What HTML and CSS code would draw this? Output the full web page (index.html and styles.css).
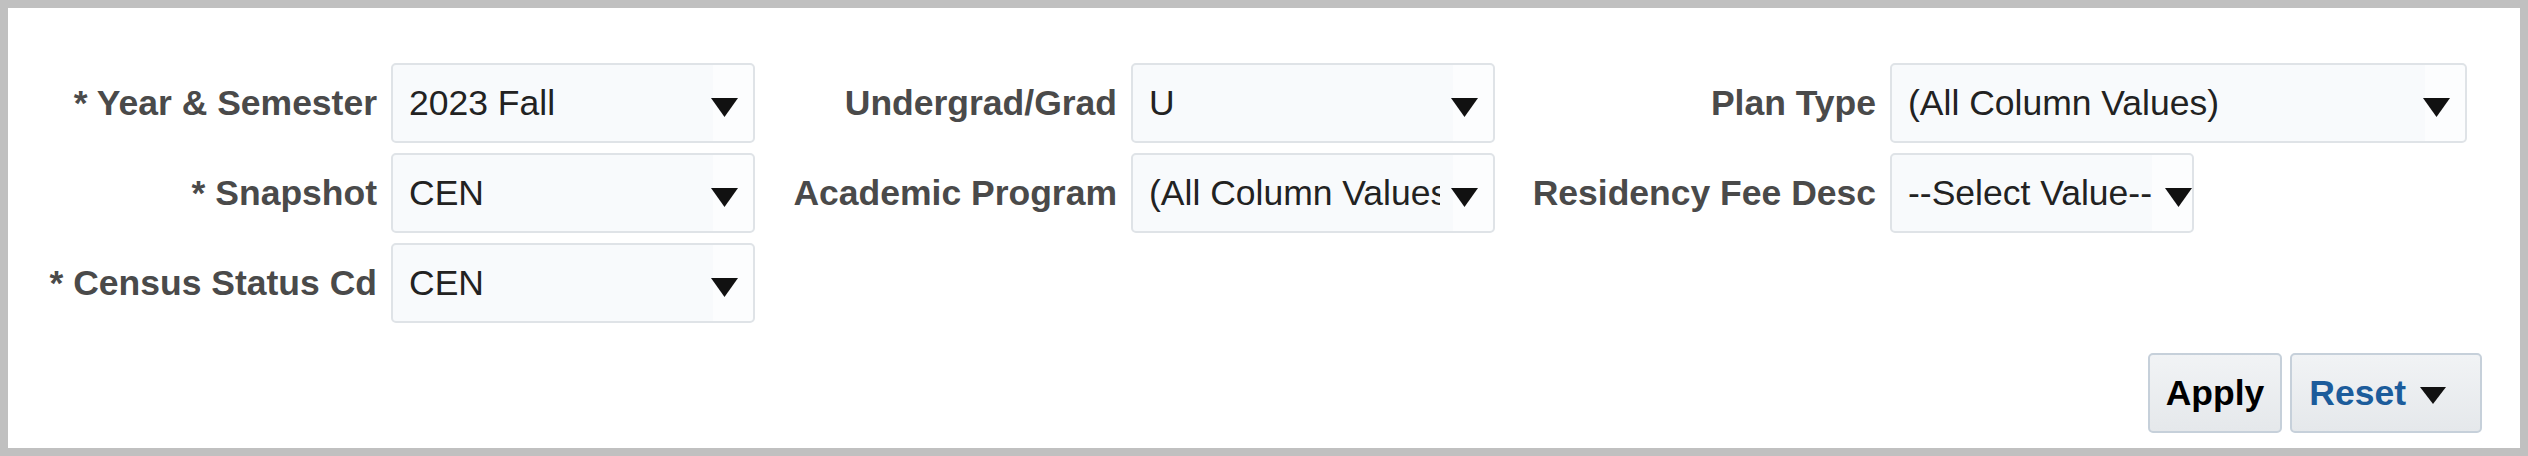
FILE: index.html
```html
<!DOCTYPE html>
<html lang="en">
<head>
<meta charset="utf-8">
<title>Prompts</title>
<link rel="stylesheet" href="styles.css">
</head>
<body>
<div class="panel">
  <div class="prompts">
    <div class="group g1">
      <div class="lbl">* Year &amp; Semester</div>
      <div class="select"><span class="val">2023 Fall</span><svg class="arrow" viewBox="0 0 27 19"><polygon points="0,0 27,0 13.5,19"/></svg></div>
      <div class="lbl">* Snapshot</div>
      <div class="select"><span class="val">CEN</span><svg class="arrow" viewBox="0 0 27 19"><polygon points="0,0 27,0 13.5,19"/></svg></div>
      <div class="lbl">* Census Status Cd</div>
      <div class="select"><span class="val">CEN</span><svg class="arrow" viewBox="0 0 27 19"><polygon points="0,0 27,0 13.5,19"/></svg></div>
    </div>
    <div class="group g2">
      <div class="lbl">Undergrad/Grad</div>
      <div class="select"><span class="val">U</span><svg class="arrow" viewBox="0 0 27 19"><polygon points="0,0 27,0 13.5,19"/></svg></div>
      <div class="lbl">Academic Program</div>
      <div class="select"><span class="val">(All Column Values)</span><svg class="arrow" viewBox="0 0 27 19"><polygon points="0,0 27,0 13.5,19"/></svg></div>
    </div>
    <div class="group g3">
      <div class="lbl">Plan Type</div>
      <div class="select"><span class="val">(All Column Values)</span><svg class="arrow" viewBox="0 0 27 19"><polygon points="0,0 27,0 13.5,19"/></svg></div>
      <div class="lbl">Residency Fee Desc</div>
      <div class="select compact"><span class="val">--Select Value--</span><svg class="arrow" viewBox="0 0 27 19"><polygon points="0,0 27,0 13.5,19"/></svg></div>
    </div>
  </div>
  <div class="actions">
    <button class="btn apply">Apply</button>
    <button class="btn reset">Reset<svg class="btn-arrow" viewBox="0 0 26 17"><polygon points="0,0 26,0 13,17"/></svg></button>
  </div>
</div>
</body>
</html>
```

FILE: styles.css
```css
html, body {
  margin: 0;
  padding: 0;
}

body {
  background: #c0c0c0;
  padding: 8px;
  box-sizing: border-box;
  height: 456px;
  font-family: "Liberation Sans", Arial, sans-serif;
  font-size: 35.5px;
}

.panel {
  background: #ffffff;
  height: 440px;
  box-sizing: border-box;
  padding: 55px 38px 0 32px;
}

.prompts {
  display: flex;
  align-items: flex-start;
  gap: 36px;
}

.group {
  display: grid;
  column-gap: 14px;
  row-gap: 10px;
  grid-auto-rows: 80px;
}

.g1 { grid-template-columns: 337px 364px; }
.g2 { grid-template-columns: 326px 364px; }
.g3 { grid-template-columns: 345px 577px; }

.lbl {
  display: flex;
  align-items: center;
  justify-content: flex-end;
  font-weight: bold;
  color: #4a4a4a;
  white-space: nowrap;
}

.select {
  box-sizing: border-box;
  height: 80px;
  border: 2px solid #dfe3e7;
  border-radius: 5px;
  background: linear-gradient(to left, #fcfdfe 40px, #f8fafc 40px);
  display: flex;
  align-items: center;
  padding: 0 15px 0 16px;
  color: #222222;
}

.select.compact {
  width: 304px;
  padding-right: 0;
}

.val {
  flex: 1;
  min-width: 0;
  overflow: hidden;
  white-space: nowrap;
}

.arrow {
  width: 27px;
  height: 19px;
  flex: none;
  margin-left: 11px;
  margin-top: 9px;
  fill: #111111;
}

.select.compact .arrow {
  margin-left: 10px;
}

.actions {
  display: flex;
  justify-content: flex-end;
  gap: 8px;
  margin-top: 30px;
}

.btn {
  box-sizing: border-box;
  height: 80px;
  border: 2px solid #c6d0da;
  border-radius: 5px;
  background: linear-gradient(#f1f3f5, #e5e8eb);
  font: inherit;
  font-weight: bold;
  display: flex;
  align-items: center;
  margin: 0;
}

.apply {
  color: #000000;
  padding: 0 16px;
}

.reset {
  color: #1c5c9b;
  padding: 0 34px 0 17px;
}

.btn-arrow {
  width: 26px;
  height: 17px;
  margin-left: 14px;
  margin-top: 5px;
  fill: #111111;
}
```
